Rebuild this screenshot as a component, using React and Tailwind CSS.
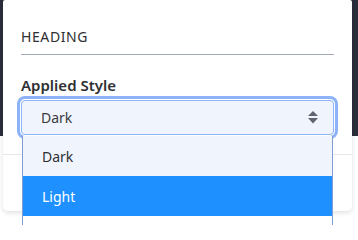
import React, { useState } from 'react';

const OPTIONS = ['Dark', 'Light'];

const SortIcon = () => (
    <svg width="10" height="13" viewBox="0 0 10 13" className="fill-[#5f6470]">
        <path d="M5 0 L10 5 H0 Z" />
        <path d="M0 7 H10 L5 12.5 Z" />
    </svg>
);

const App = () => {
    const [value] = useState('Dark');
    const [hovered] = useState('Light');

    return (
        <div
            className="w-[358px] h-[225px] overflow-hidden pl-[3px] pr-[6px] bg-[linear-gradient(to_bottom,#2b2d3a_136px,#ffffff_136px)]"
            style={{ fontFamily: '"Noto Sans", "Open Sans", sans-serif' }}
        >
            <div className="h-[211px] bg-white rounded-b-[5px] rounded-t-[2px] shadow-[0_2px_5px_rgba(0,0,0,0.12)] flex flex-col">
                <div className="px-[18px]">
                    {/* Heading */}
                    <div className="pt-[27px] pb-[8px] border-b border-[#a3a9b8] text-[14px] leading-[19px] tracking-[0.6px] text-[#2e2f33]">
                        HEADING
                    </div>

                    {/* Applied style */}
                    <div className="mt-[20px] text-[15px] leading-[20px] font-semibold text-[#2e2f33]">
                        Applied Style
                    </div>
                    <div className="relative mt-[5px] z-10">
                        <div className="h-[35px] flex items-center justify-between pl-[19px] pr-[15px] rounded-[4px] border border-[#8fb4f5] bg-[#f0f4fd] shadow-[0_0_0_1px_#ffffff,0_0_0_4px_#8cb3f7] text-[14px] text-[#3a3b40]">
                            <span>{value}</span>
                            <SortIcon />
                        </div>
                        {/* Dropdown list */}
                        <ul className="absolute top-[36px] left-[1px] right-[1px] border-x border-[#7f9dcf] bg-white">
                            {OPTIONS.map((opt) => (
                                <li
                                    key={opt}
                                    className={`h-[40px] flex items-center pl-[19px] text-[14px] ${
                                        opt === hovered
                                            ? 'bg-[#1e90ff] text-white'
                                            : 'bg-[#f0f4fd] text-[#2e2f33]'
                                    }`}
                                >
                                    {opt}
                                </li>
                            ))}
                            <li className="h-[40px] bg-white"></li>
                        </ul>
                    </div>
                </div>

                {/* Footer */}
                <div className="mt-[19px] flex-1 border-t border-[#e5e7eb]"></div>
            </div>
        </div>
    );
};

export default App;
